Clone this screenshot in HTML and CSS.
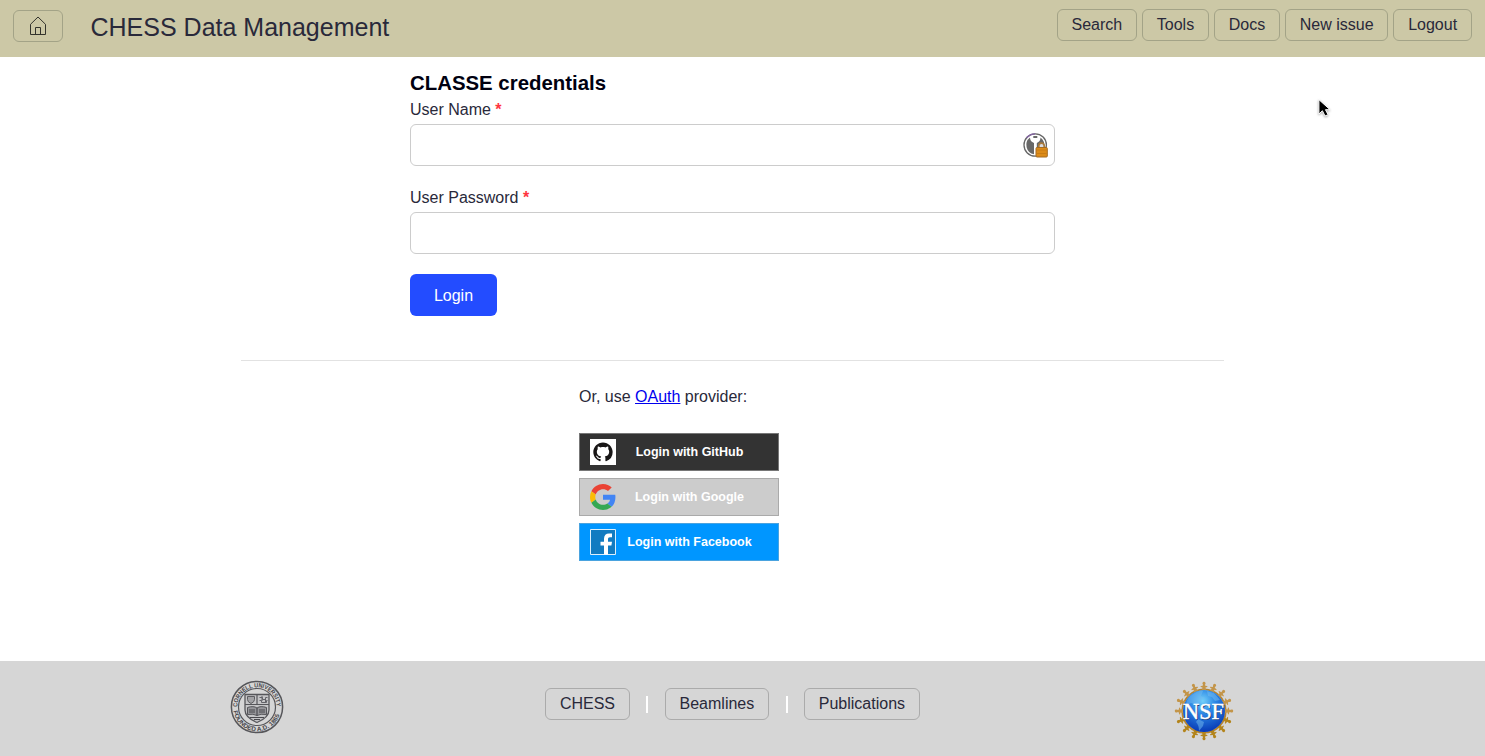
FILE: index.html
```html
<!DOCTYPE html>
<html lang="en">
<head>
<meta charset="utf-8">
<title>CHESS Data Management</title>
<link rel="stylesheet" href="styles.css">
</head>
<body>
<header class="header">
  <a class="btn home" aria-label="Home">
    <svg width="18" height="20" viewBox="0 0 18 20" fill="none" stroke="#33332c" stroke-width="1"><path d="M1.500 18.500V8.300L9 1l7.500 7.300V18.500zM6.500 18.500v-7h5v7"/></svg>
  </a>
  <h1 class="title">CHESS Data Management</h1>
  <nav class="nav">
    <a class="btn">Search</a><a class="btn">Tools</a><a class="btn">Docs</a><a class="btn">New issue</a><a class="btn">Logout</a>
  </nav>
</header>
<main class="main">
  <form class="form">
    <h2 class="heading">CLASSE credentials</h2>
    <label class="label">User Name <span class="req">*</span></label>
    <div class="field">
      <svg width="26" height="26" viewBox="0 0 26 26">
        <circle cx="12.200" cy="13" r="11.200" fill="#fff" stroke="#666" stroke-width="1.300"/>
        <path d="M3.500 6a11.200 11.200 0 0 1 8.700-4.200" fill="none" stroke="#8464a4" stroke-width="1.300"/>
        <path d="M7 5.500q0 4 4 5.500v11.300A9.500 9.500 0 0 1 7 5.500zM17.500 5.500q0 4-3.700 5.500v11.300a9.500 9.500 0 0 0 3.700-16.800z" fill="#686868"/>
        <path d="M10.300 4.200h4v1.600h-4z" fill="#444"/>
        <path d="M15.800 16v-2.200a2.700 2.700 0 0 1 5.400 0V16" fill="#d8dce4" stroke="#a87a3d" stroke-width="1.700"/>
        <rect x="13" y="15.500" width="11.300" height="9.500" rx="1" fill="#dc8b18" stroke="#a46b22"/>
        <path d="M14 18h9.500M14 21.500h9.500" stroke="#c97c14"/>
      </svg>
    </div>
    <label class="label">User Password <span class="req">*</span></label>
    <div class="field second"></div>
    <button class="login" type="button">Login</button>
  </form>
  <hr class="rule">
  <section class="oauth">
    <p class="or">Or, use <a class="link">OAuth</a> provider:</p>
    <a class="provider github">
      <svg class="logo" width="26" height="26" viewBox="0 0 26 26"><path fill="#fff" d="M0 0h26v26H0z"/><path transform="translate(3.300 3.400) scale(1.210)" fill="#181616" d="M8 0C3.580 0 0 3.580 0 8c0 3.540 2.290 6.530 5.470 7.590.4.070.55-.17.55-.38 0-.19-.01-.82-.01-1.490-2.010.37-2.530-.49-2.690-.94-.09-.23-.48-.94-.82-1.130-.28-.15-.68-.52-.01-.53.63-.01 1.080.58 1.230.82.72 1.210 1.870.87 2.330.66.07-.52.28-.87.51-1.070-1.780-.2-3.640-.89-3.640-3.950 0-.87.31-1.590.82-2.150-.08-.2-.36-1.020.08-2.120 0 0 .67-.21 2.200.82.64-.18 1.320-.27 2-.27s1.360.09 2 .27c1.530-1.040 2.200-.82 2.200-.82.44 1.100.16 1.920.08 2.120.51.56.82 1.270.82 2.150 0 3.070-1.870 3.750-3.650 3.950.29.25.54.73.54 1.480 0 1.070-.01 1.930-.01 2.200 0 .21.15.46.55.38A8.010 8.010 0 0 0 16 8c0-4.420-3.580-8-8-8z"/></svg>
      <span class="ptext">Login with GitHub</span>
    </a>
    <a class="provider google">
      <svg class="logo" width="26" height="26" viewBox="0 0 48 48"><path fill="#EA4335" d="M24 9.500c3.540 0 6.710 1.220 9.210 3.600l6.850-6.850C35.900 2.380 30.470 0 24 0 14.620 0 6.510 5.380 2.560 13.220l7.980 6.190C12.430 13.720 17.740 9.500 24 9.500z"/><path fill="#4285F4" d="M46.980 24.550c0-1.570-.15-3.090-.38-4.550H24v9.020h12.940c-.58 2.960-2.260 5.480-4.780 7.180l7.730 6c4.510-4.180 7.090-10.360 7.090-17.650z"/><path fill="#FBBC05" d="M10.530 28.590A14.500 14.500 0 0 1 9.770 24c0-1.600.27-3.140.76-4.590l-7.980-6.190A23.900 23.900 0 0 0 0 24c0 3.880.92 7.540 2.560 10.780z"/><path fill="#34A853" d="M24 48c6.480 0 11.930-2.130 15.890-5.810l-7.730-6c-2.150 1.450-4.920 2.300-8.160 2.300-6.260 0-11.570-4.220-13.470-9.910l-7.980 6.190C6.510 42.620 14.620 48 24 48z"/></svg>
      <span class="ptext">Login with Google</span>
    </a>
    <a class="provider facebook">
      <svg class="logo" width="26" height="26" viewBox="0 0 26 26"><path d="M.5.500h25v25H.5z" fill="#117bc1" stroke="#dceffc"/><path fill="#fff" d="M14 25.500v-9h-3.500v-3.700H14V9.800c0-3.400 2-5.200 5-5.200h3v3.600h-2c-1.500 0-2 .7-2 2v2.600h4l-.6 3.700H18v9z"/></svg>
      <span class="ptext">Login with Facebook</span>
    </a>
  </section>
</main>
<footer class="footer">
  <div class="seal">
    <svg width="54" height="54" viewBox="0 0 54 54">
      <defs><path id="arc-top" d="M7.300 27A19.700 19.700 0 0 1 46.700 27"/><path id="arc-bottom" d="M3.400 31A23.900 23.900 0 0 0 50.600 31"/></defs>
      <g fill="none" stroke="#56565a"><circle cx="27" cy="27" r="25.600" stroke-width="1.500"/><circle cx="27" cy="27" r="18.500" stroke-width="1.200"/></g>
      <g class="seal-text"><text textLength="61" lengthAdjust="spacingAndGlyphs"><textPath href="#arc-top" textLength="61" lengthAdjust="spacingAndGlyphs">CORNELL UNIVERSITY</textPath></text><text textLength="63" lengthAdjust="spacingAndGlyphs"><textPath href="#arc-bottom" textLength="63" lengthAdjust="spacingAndGlyphs">FOUNDED A.D. 1865</textPath></text></g>
      <path d="M15 14.500h24V30q0 7.500-12 12.500Q15 37.500 15 30z" fill="#c5c5c7" stroke="#56565a" stroke-width="1.300"/>
      <path d="M15 24.500h24M27 14.500v10" stroke="#56565a" stroke-width="1.200"/>
      <path d="M17.500 16.500h7v3q0 2.500-3.500 4-3.500-1.500-3.500-4z" fill="#a2a2a5" stroke="#5d5d61"/>
      <path d="M29.500 17.500h3v2h3v-2h2M29.500 20.500h2v2h5v-2h1M32 16v5M35.500 18v5" fill="none" stroke="#636368"/>
      <path d="M17.500 34.500v-7q6-2 9.500.5 3.500-2.500 9.500-.5v7q-6-1-9.500 1-3.500-2-9.500-1z" fill="#96969a" stroke="#56565a"/>
      <path d="M27 28v7.500M19 30h6M19 32h6M29 30h6M29 32h6M20 37.500h14M24 39.500h6" stroke="#48484d" stroke-width="1.100"/>
    </svg>
  </div>
  <nav class="links">
    <a class="btn">CHESS</a><span class="sep"></span><a class="btn">Beamlines</a><span class="sep"></span><a class="btn">Publications</a>
  </nav>
  <div class="nsf">
    <svg width="60" height="60" viewBox="0 0 60 60">
      <defs>
        <linearGradient id="gold" gradientUnits="userSpaceOnUse" x1="0" y1="0" x2="0" y2="60"><stop offset="0" stop-color="#caa058"/><stop offset=".6" stop-color="#ad7b20"/><stop offset="1" stop-color="#b79111"/></linearGradient>
        <radialGradient id="globe" cx=".47" cy=".26" r=".75"><stop offset="0" stop-color="#72d0fa"/><stop offset=".4" stop-color="#2c87e5"/><stop offset="1" stop-color="#0738b5"/></radialGradient>
        <path id="figure" d="M30 .8a1.500 1.500 0 0 1 1.200 2.500L31 4.500l2.500.8-.2.800-1.800.3.600 2.900h-4.200l.6-2.900-1.800-.3-.2-.8 2.500-.8-.2-1.200A1.500 1.500 0 0 1 30 .8z"/>
      </defs>
      <circle cx="30" cy="30" r="21.700" fill="none" stroke="#b68530" stroke-width="1.800"/>
      <g class="ring top"><use href="#figure" transform="rotate(-90 30 30)"/><use href="#figure" transform="rotate(-67.500 30 30)"/><use href="#figure" transform="rotate(-45 30 30)"/><use href="#figure" transform="rotate(-22.500 30 30)"/><use href="#figure"/><use href="#figure" transform="rotate(22.500 30 30)"/><use href="#figure" transform="rotate(45 30 30)"/><use href="#figure" transform="rotate(67.500 30 30)"/><use href="#figure" transform="rotate(90 30 30)"/></g>
      <g class="ring bottom"><use href="#figure" transform="rotate(112.500 30 30)"/><use href="#figure" transform="rotate(135 30 30)"/><use href="#figure" transform="rotate(157.500 30 30)"/><use href="#figure" transform="rotate(180 30 30)"/><use href="#figure" transform="rotate(202.500 30 30)"/><use href="#figure" transform="rotate(225 30 30)"/><use href="#figure" transform="rotate(247.500 30 30)"/></g>
      <circle cx="30" cy="30" r="21" fill="url(#globe)"/>
      <path d="M16 15q8-6 13-5l-2 5 4 2-5 3-3 4-6-2-5 3q0-6 4-10zM33 10l7 2 6 7-5 1-3-4-4-1zM24 38l6 3-1 4-4 5q0-6-3-9z" fill="#76bdf0" opacity=".5"/>
      <text class="nsf-shadow" x="10" y="38.500" textLength="41" lengthAdjust="spacingAndGlyphs">NSF<tspan></tspan></text>
      <text class="nsf-text" x="9" y="37.500" textLength="41" lengthAdjust="spacingAndGlyphs">NSF</text>
    </svg>
  </div>
</footer>
<svg class="cursor" width="18" height="24" viewBox="0 0 16 22"><path d="M1.500 1.500v13.200l3.200-3 2.400 4.800 2.800-1.200-2.400-4.600h4.200z" fill="#000" stroke="#fff" stroke-width=".9"/></svg>
</body>
</html>
```
FILE: styles.css
```css
* { box-sizing: border-box; }
body { margin: 0; height: 756px; display: flex; flex-direction: column; overflow: hidden; background: #fff; color: #29293a; font: 16px/24px "Liberation Sans", Arial, sans-serif; }
.header { height: 57px; flex: none; display: flex; align-items: flex-start; background: #ccc8a6; padding: 9px 13px 0; }
.btn { display: inline-flex; align-items: center; justify-content: center; height: 32px; padding: 0 13.900px; border: 1px solid #a3a387; border-radius: 6px; line-height: 30px; white-space: nowrap; }
.home { width: 50px; margin-top: 1px; padding: 0; }
.title { margin: 4px 0 0 27.500px; font-size: 25px; line-height: 28px; font-weight: 400; white-space: nowrap; }
.nav { display: flex; gap: 4.800px; margin-left: auto; }
.main { flex: 1; display: flex; flex-direction: column; }
.form { width: 645px; margin: 14px 0 0 410px; display: flex; flex-direction: column; align-items: flex-start; }
.heading { margin: 0; font-size: 20.400px; line-height: 25px; color: #000010; }
.label { line-height: 24px; margin: 2px 0; }
.req { color: #ff3540; font-weight: 700; }
.field { width: 645px; height: 42px; border: 1px solid #ccc; border-radius: 6px; display: flex; align-items: center; justify-content: flex-end; padding-right: 5px; margin-bottom: 18px; }
.second { margin-bottom: 20px; }
.login { width: 87px; height: 42px; border: 0; border-radius: 6px; background: #234cff; color: #fff; font: inherit; padding: 1px 0 0; }
.rule { width: 983px; height: 1px; border: 0; background: #e2e2e2; margin: 44px 0 0 241px; }
.oauth { margin: 24px 0 0 579px; width: 200px; display: flex; flex-direction: column; }
.or { margin: 0 0 24px; }
.link { color: #0000ee; text-decoration: underline; }
.provider { height: 38px; margin-bottom: 7px; border: 1px solid #999; display: flex; align-items: center; padding-left: 10px; color: #fff; font-weight: 700; font-size: 12.500px; }
.ptext { flex: 1; text-align: center; padding-right: 15px; white-space: nowrap; }
.github { background: #333; border-color: #777; }
.google { background: #ccc; border-color: #aaa; }
.facebook { background: #0096ff; border-color: #4aa3df; }
.logo { flex: none; }
.footer { height: 95px; flex: none; background: #d6d6d6; display: grid; grid-template-columns: 545px 375px 1fr; align-items: start; }
.seal { padding: 19px 0 0 230px; }
.seal svg, .nsf svg { display: block; }
.seal-text { font: 700 6.200px "Liberation Sans", Arial, sans-serif; fill: #46464b; }
.links { display: flex; align-items: center; justify-content: space-between; margin-top: 27px; }
.links .btn { border-color: #ababab; }
.sep { width: 2px; height: 17px; background: #fff; }
.nsf { padding: 20px 0 0 254px; }
.ring { fill: #c39549; }
.bottom { fill: #b3841b; }
.nsf-text, .nsf-shadow { font: 400 23px "Liberation Serif", "Times New Roman", serif; fill: #fff; stroke: #fff; stroke-width: .5px; }
.nsf-shadow { fill: #13346e; stroke: none; }
.cursor { position: absolute; left: 1317px; top: 98px; filter: drop-shadow(0 1px 1px #0005); }
```
